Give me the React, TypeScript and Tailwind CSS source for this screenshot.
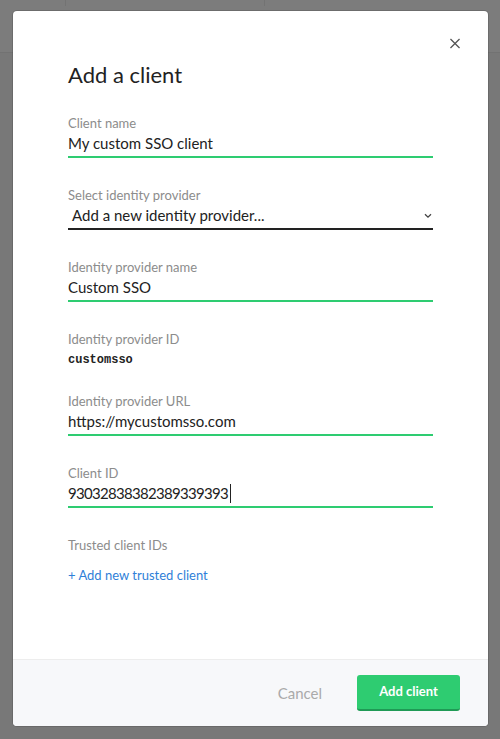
import React from "react";

const font = { fontFamily: "Lato, 'Noto Sans', sans-serif" };

function Field({
  label,
  value,
  cursor,
  tight,
}: {
  label: string;
  value: string;
  cursor?: boolean;
  tight?: boolean;
}) {
  return (
    <div className="flex flex-col">
      <div className="text-[13px] leading-4 text-[#8c8c8c]">{label}</div>
      <div className="mt-[2px] flex h-[25px] items-start border-b-2 border-[#2ecc71] text-[15px] leading-5 text-[#222]">
        <span className={tight ? "tracking-[-0.7px]" : ""}>{value}</span>
        {cursor && <span className="ml-[2px] mt-[1px] h-[19px] w-px bg-[#222]" />}
      </div>
    </div>
  );
}

export default function App() {
  return (
    <div
      className="relative h-[739px] w-[500px] overflow-hidden bg-[#787878] pl-[13px] pt-[11px]"
      style={font}
    >
      {/* dimmed page behind the dialog */}
      <div className="absolute left-0 top-0 h-[53px] w-full border-b border-[#727272] bg-[#7c7c7c]" />
      <div className="absolute left-[65px] top-0 h-[6px] w-[200px] border-l border-r border-[#737373]" />

      <div className="relative flex h-[715px] w-[475px] flex-col overflow-hidden rounded-[4px] bg-white shadow-[0_0_0_1px_rgba(0,0,0,0.12)]">
        <button className="absolute right-[28px] top-[27px] flex h-[10px] w-[10px] items-center justify-center text-[#555]">
          <svg width="11" height="11" viewBox="0 0 11 11" fill="none">
            <path d="M0.5 0.5 L10.5 10.5 M10.5 0.5 L0.5 10.5" stroke="currentColor" strokeWidth="1.5" />
          </svg>
        </button>

        <div className="flex flex-1 flex-col px-[55px] pt-[50px]">
          <h1 className="text-[22px] leading-7 text-[#222]">Add a client</h1>

          <div className="mt-[26px] flex flex-col gap-[29px]">
            <Field label="Client name" value="My custom SSO client" />

            <div className="flex flex-col">
              <div className="text-[13px] leading-4 text-[#8c8c8c]">Select identity provider</div>
              <div className="mt-[2px] flex h-[25px] items-start justify-between border-b-2 border-[#222] pl-1 pr-[1px] text-[15px] leading-5 text-[#222]">
                <span>Add a new identity provider...</span>
                <svg width="8" height="6" viewBox="0 0 8 6" className="mt-[8px]" fill="none">
                  <path d="M1 1.2 L4 4.2 L7 1.2" stroke="#444" strokeWidth="1.3" />
                </svg>
              </div>
            </div>

            <Field label="Identity provider name" value="Custom SSO" />

            <div className="flex flex-col">
              <div className="text-[13px] leading-4 text-[#8c8c8c]">Identity provider ID</div>
              <div
                className="mt-[5px] text-[12px] font-bold leading-4 text-[#222]"
                style={{ fontFamily: "'Liberation Mono', monospace" }}
              >
                customsso
              </div>
            </div>
          </div>

          <div className="mt-[25px] flex flex-col gap-[29px]">
            <Field label="Identity provider URL" value="https://mycustomsso.com" />
            <Field label="Client ID" value="93032838382389339393" cursor tight />

            <div className="flex flex-col">
              <div className="text-[13px] leading-4 text-[#8c8c8c]">Trusted client IDs</div>
              <a className="mt-[14px] text-[13px] leading-4 text-[#2f7fd8]">+ Add new trusted client</a>
            </div>
          </div>
        </div>

        <div className="flex h-[67px] items-center justify-end gap-[35px] border-t border-[#ededed] bg-[#f7f8fa] pr-[28px]">
          <button className="text-[15px] text-[#aaa]">Cancel</button>
          <button className="h-[36px] w-[103px] rounded-[3px] border-b-2 border-[#1f9a55] bg-[#2ecc71] text-[13px] font-bold text-white">
            Add client
          </button>
        </div>
      </div>
    </div>
  );
}
